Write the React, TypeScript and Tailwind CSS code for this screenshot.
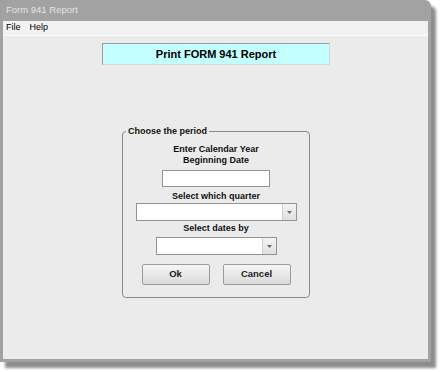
import { ChangeEvent, useState } from "react";

// Combo box in the old Swing/Windows look: white field with a small arrow button
function Combo({ width }: { width: string }) {
  return (
    <div className={`${width} h-[18px] flex border border-[#939393] bg-white`}>
      <div className="flex-1" />
      <div className="w-[14px] flex items-center justify-center border-l border-[#cfcfcf] bg-gradient-to-b from-[#f4f4f4] to-[#e0e0e0]">
        <svg width="5" height="3" viewBox="0 0 5 3">
          <path d="M0 0 H5 L2.5 3 Z" fill="#6a6a6a" />
        </svg>
      </div>
    </div>
  );
}

function Btn({ label }: { label: string }) {
  return (
    <button className="w-[68px] h-[21px] border border-[#9c9c9c] rounded-[2px] bg-gradient-to-b from-[#f7f7f7] to-[#d9d9d9] text-[9.5px] font-bold text-[#222]">
      {label}
    </button>
  );
}

export default function App() {
  const [year, setYear] = useState("");

  const handleChange = (e: ChangeEvent<HTMLInputElement>) => {
    setYear(e.target.value);
  };

  return (
    <div className="w-[441px] h-[372px] bg-white font-['Liberation_Sans',Arial,sans-serif]">
      <div className="w-[431px] h-[362px] flex flex-col bg-[#a2a2a2] rounded-tr-[6px] px-[3px] pb-[3px] shadow-[5px_6px_3px_rgba(0,0,0,0.45)]">
        <div className="h-[21px] flex items-center pl-[3px] text-[9.5px] text-[#e4e4e4]">
          Form 941 Report
        </div>
        <div className="flex-1 flex flex-col bg-[#ebebeb]">
          {/* barra de menu */}
          <div className="h-[15px] flex items-center gap-[9px] pl-[3px] bg-[#f2f2f2] border-b border-[#fafafa] text-[9px] text-black">
            <span>File</span>
            <span>Help</span>
          </div>

          <div className="ml-[99px] mt-[7px] w-[228px] h-[22px] flex items-center justify-center bg-[#c4ffff] border border-[#9c9c9c] border-b-[#d6d6d6] border-r-[#d6d6d6] text-[11px] font-bold text-black">
            Print FORM 941 Report
          </div>

          <fieldset className="ml-[119px] mt-[60px] w-[188px] h-[173px] border border-[#8a8a8a] rounded-[4px] flex flex-col items-center">
            <legend className="ml-[3px] px-[2px] text-[9px] leading-[13px] font-bold text-[#111]">
              Choose the period
            </legend>
            <div className="mt-[6px] text-[9px] leading-[11px] font-bold text-[#111] text-center">
              Enter Calendar Year
              <br />
              Beginning Date
            </div>
            <input
              value={year}
              onChange={handleChange}
              className="mt-[4px] w-[108px] h-[17px] border border-[#939393] bg-white text-[9px] px-1 outline-none"
            />
            <div className="mt-[4px] text-[9px] leading-[11px] font-bold text-[#111]">
              Select which quarter
            </div>
            <div className="mt-[1px]">
              <Combo width="w-[161px]" />
            </div>
            <div className="mt-[2px] text-[9px] leading-[11px] font-bold text-[#111]">
              Select dates by
            </div>
            <div className="mt-[3px]">
              <Combo width="w-[121px]" />
            </div>
            <div className="mt-[9px] flex gap-[13px]">
              <Btn label="Ok" />
              <Btn label="Cancel" />
            </div>
          </fieldset>
        </div>
      </div>
    </div>
  );
}
